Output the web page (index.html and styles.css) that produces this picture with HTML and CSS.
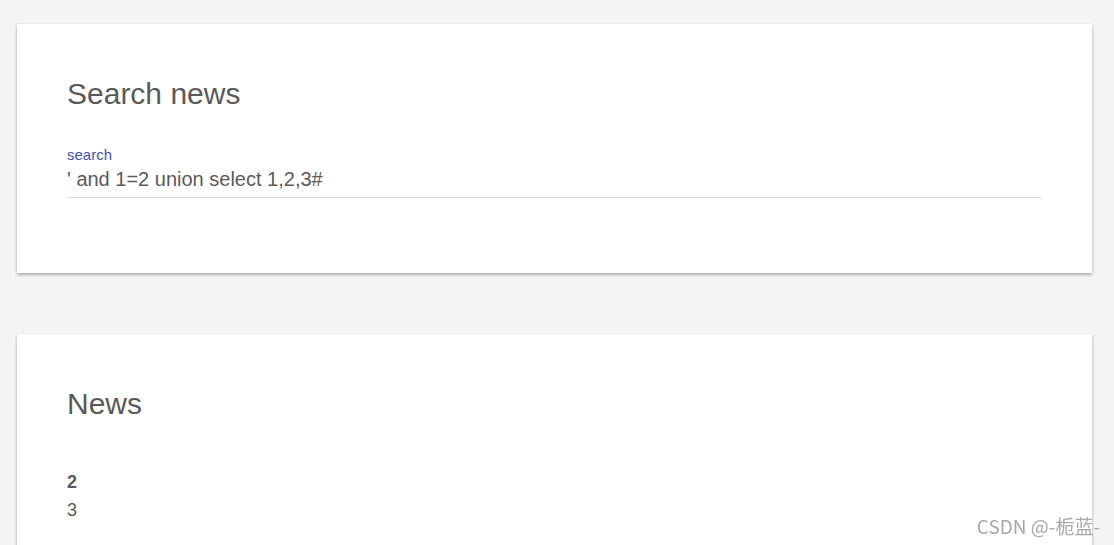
FILE: index.html
```html
<!DOCTYPE html>
<html>
<head>
<meta charset="utf-8">
<title>Search news</title>
<link rel="stylesheet" href="styles.css">
</head>
<body>
<main class="page">
  <section class="card">
    <h1 class="card-title">Search news</h1>
    <div class="field">
      <label class="field-label">search</label>
      <div class="field-input">' and 1=2 union select 1,2,3#</div>
    </div>
  </section>
  <section class="card card-news">
    <h1 class="card-title">News</h1>
    <div class="news-list">
      <div class="news-title">2</div>
      <div class="news-body">3</div>
    </div>
  </section>
</main>
<div class="watermark">CSDN @-栀蓝-</div>
</body>
</html>
```
FILE: styles.css
```css
html, body {
  margin: 0;
  padding: 0;
  background: #f4f4f4;
  height: 100%;
  overflow: hidden;
}
body {
  font-family: "Liberation Sans", Arial, sans-serif;
  color: #5a5a5a;
}
.page {
  display: flex;
  flex-direction: column;
  gap: 61px;
  padding: 24px 22px 0 17px;
}
.card {
  background: #fff;
  box-shadow: 0 2px 3px rgba(0,0,0,0.28), 0 0 2px rgba(0,0,0,0.08);
  padding: 52px 50px 75px 50px;
}
.card-title {
  margin: 0;
  font-size: 30px;
  line-height: 36px;
  font-weight: normal;
  color: #5a5a5a;
}
.field {
  margin-top: 34px;
  display: flex;
  flex-direction: column;
}
.field-label {
  font-size: 15px;
  line-height: 18px;
  color: #3f51b5;
}
.field-input {
  margin-top: 3px;
  font-size: 20px;
  line-height: 24px;
  padding-bottom: 6px;
  border-bottom: 1px solid #dedede;
  color: #5a5a5a;
}
.card-news {
  padding-bottom: 40px;
}
.news-list {
  margin-top: 46px;
  font-size: 18px;
  line-height: 28px;
}
.news-title {
  font-weight: bold;
}
.watermark {
  position: fixed;
  right: 14px;
  bottom: 8px;
  font-family: "Noto Sans CJK SC", "Noto Sans", sans-serif;
  font-size: 19px;
  line-height: 22px;
  color: #a8a8a8;
  text-shadow: 0 0 2px #fff;
}
```
